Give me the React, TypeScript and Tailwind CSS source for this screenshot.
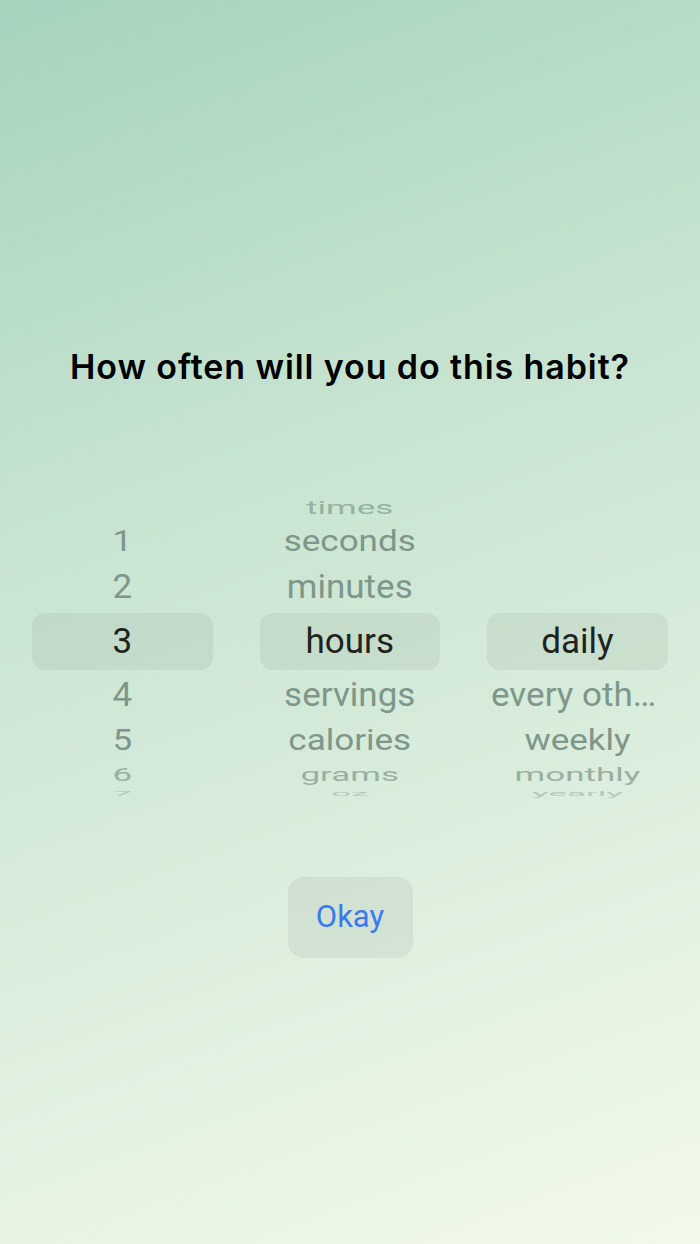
import React from "react";

const slots = [
  { off: -4, h: "h-[9px]", scale: "scale-y-[0.18]", color: "text-[#b3c9bc]" },
  { off: -3, h: "h-[28px]", scale: "scale-y-[0.52]", color: "text-[#97b0a2]" },
  { off: -2, h: "h-[40px]", scale: "scale-y-[0.84]", color: "text-[#7f968a]" },
  { off: -1, h: "h-[51px]", scale: "scale-y-[0.95]", color: "text-[#7f968a]" },
  { off: 0, h: "h-[57px]", scale: "", color: "text-[#1e2320]" },
  { off: 1, h: "h-[51px]", scale: "scale-y-[0.95]", color: "text-[#7f968a]" },
  { off: 2, h: "h-[40px]", scale: "scale-y-[0.84]", color: "text-[#7f968a]" },
  { off: 3, h: "h-[28px]", scale: "scale-y-[0.52]", color: "text-[#97b0a2]" },
  { off: 4, h: "h-[9px]", scale: "scale-y-[0.18]", color: "text-[#b3c9bc]" },
];

const WheelColumn = ({ items, selected }: { items: string[]; selected: number }) => (
  <div className="flex w-[181px] flex-col">
    {slots.map((s) => {
      const item = items[selected + s.off];
      return (
        <div
          key={s.off}
          className={`flex ${s.h} items-center justify-center ${s.off === 0 ? "rounded-[13px] bg-black/[0.05]" : ""}`}
        >
          {item !== undefined && (
            <span
              className={`block w-full truncate px-1 text-center text-[35px] leading-[44px] ${s.scale} ${s.color}`}
            >
              {item}
            </span>
          )}
        </div>
      );
    })}
  </div>
);

export default function App() {
  return (
    <div
      className="flex h-[1244px] w-full flex-col items-center bg-[linear-gradient(160deg,#a5d3bc_0%,#c6e3d0_35%,#f2f9ea_100%)]"
      style={{ fontFamily: "Roboto, 'Liberation Sans', sans-serif" }}
    >
      <h1
        className="mt-[346px] text-[34px] font-semibold leading-[42px] tracking-[0.9px] text-black"
        style={{ fontFamily: "Inter, 'Liberation Sans', sans-serif" }}
      >
        How often will you do this habit?
      </h1>

      <div className="mt-[97px] flex w-full gap-[47px] px-[32px]">
        <WheelColumn items={["1", "2", "3", "4", "5", "6", "7"]} selected={2} />
        <WheelColumn
          items={["times", "seconds", "minutes", "hours", "servings", "calories", "grams", "oz"]}
          selected={3}
        />
        <WheelColumn items={["daily", "every other day", "weekly", "monthly", "yearly"]} selected={0} />
      </div>

      <button className="mt-[79px] flex h-[81px] w-[125px] items-center justify-center rounded-[16px] bg-black/[0.05] text-[31px] text-[#3a7af0]">
        Okay
      </button>
    </div>
  );
}
